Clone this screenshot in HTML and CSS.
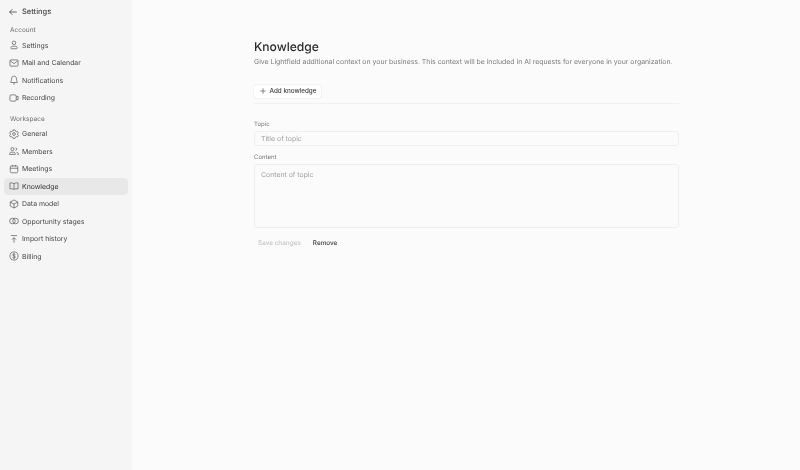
FILE: index.html
```html
<!DOCTYPE html>
<html lang="en">
<head>
<meta charset="utf-8">
<title>Knowledge</title>
<link rel="stylesheet" href="styles.css">
</head>
<body>
<div class="app">
  <aside class="sidebar">
    <div class="back">
      <svg class="back-icon" viewBox="0 0 16 16"><path d="M14 8H2.500M7 3.500 2.500 8 7 12.500"/></svg>
      <span>Settings</span>
    </div>
    <div class="group-label">Account</div>
    <nav class="nav">
      <a class="item"><svg viewBox="0 0 16 16"><circle cx="8" cy="4.500" r="2.800"/><path d="M3 12.300c0-1.500 1.200-2.300 2.600-2.300h4.800c1.400 0 2.600.8 2.600 2.300v.4c0 .8-.6 1.300-1.300 1.300H4.300C3.600 14 3 13.500 3 12.700z"/></svg><span>Settings</span></a>
      <a class="item"><svg viewBox="0 0 16 16"><rect x="1.500" y="3" width="13" height="10" rx="1.500"/><path d="M2 4.500 8 9l6-4.500"/></svg><span>Mail and Calendar</span></a>
      <a class="item"><svg viewBox="0 0 16 16"><path d="M8 1.800c-2.500 0-4 1.900-4 4.200 0 2.800-.6 4.200-1.500 5.200-.2.300 0 .8.400.8h10.200c.4 0 .6-.5.400-.8C12.600 10.200 12 8.800 12 6c0-2.300-1.500-4.200-4-4.200zM6.500 14.200h3"/></svg><span>Notifications</span></a>
      <a class="item"><svg viewBox="0 0 16 16"><rect x="1.500" y="3" width="10" height="10" rx="2"/><path d="M11.500 6.500l3-1.500v6l-3-1.500"/></svg><span>Recording</span></a>
    </nav>
    <div class="group-label second">Workspace</div>
    <nav class="nav">
      <a class="item"><svg viewBox="0 0 16 16"><path d="M6.500 1.500h3l.5 1.800 1.700 1 1.800-.5 1.500 2.600-1.300 1.400v1l1.300 1.400-1.500 2.600-1.800-.5-1.700 1-.5 1.700h-3l-.5-1.700-1.700-1-1.800.5L1 10.200l1.300-1.400v-1L1 6.400l1.500-2.600 1.800.5 1.700-1z"/><circle cx="8" cy="8" r="2.200"/></svg><span>General</span></a>
      <a class="item"><svg viewBox="0 0 16 16"><circle cx="5.500" cy="5" r="2.500"/><path d="M1 13.500v-1c0-1.500 1.200-2.500 2.500-2.500h4c1.300 0 2.500 1 2.500 2.500v1zM10.500 2.700a2.400 2.400 0 0 1 0 4.600M12 10c1.700.2 3 1.200 3 2.700v.8h-2"/></svg><span>Members</span></a>
      <a class="item"><svg viewBox="0 0 16 16"><rect x="2" y="3" width="12" height="11" rx="2"/><path d="M2 6.800h12M5.500 1.500V4M10.500 1.500V4"/></svg><span>Meetings</span></a>
      <a class="item active"><svg viewBox="0 0 16 16"><path d="M8 4.500C7 3.500 5.500 3 4 3H1.500v9.500H5c1.300 0 2.300.4 3 1.200.7-.8 1.700-1.200 3-1.200h3.500V3H12c-1.500 0-3 .5-4 1.500zM8 4.500v9"/></svg><span>Knowledge</span></a>
      <a class="item"><svg viewBox="0 0 16 16"><path d="M8 1.500 14 4.800v6.400l-6 3.300-6-3.300V4.800zM2 4.800 8 8l6-3.200M8 8v6.500"/></svg><span>Data model</span></a>
      <a class="item"><svg viewBox="0 0 16 16"><circle cx="5.500" cy="8" r="4.500"/><circle cx="10.500" cy="8" r="4.500"/></svg><span>Opportunity stages</span></a>
      <a class="item"><svg viewBox="0 0 16 16"><path d="M3 2.500h10M8 14V6M4.800 9 8 5.800 11.200 9"/></svg><span>Import history</span></a>
      <a class="item"><svg viewBox="0 0 16 16"><circle cx="8" cy="8" r="6.500"/><path d="M10.200 5.800C9.800 5 9 4.700 8 4.700c-1.300 0-2.200.6-2.200 1.600 0 2.200 4.500 1.100 4.500 3.400 0 1-1 1.600-2.300 1.600-1.100 0-2-.4-2.400-1.200M8 3.500v9"/></svg><span>Billing</span></a>
    </nav>
  </aside>
  <main class="main">
    <div class="content">
      <h1 class="title">Knowledge</h1>
      <p class="desc">Give Lightfield additional context on your business. This context will be included in AI requests for everyone in your organization.</p>
      <div class="toolbar">
        <button class="add" type="button"><svg viewBox="0 0 16 16"><path d="M8 2.500v11M2.500 8h11"/></svg>Add knowledge</button>
      </div>
      <label class="label topic-label">Topic</label>
      <div class="field input">Title of topic</div>
      <label class="label content-label">Content</label>
      <div class="field area">Content of topic</div>
      <div class="actions">
        <span class="save">Save changes</span>
        <span class="remove">Remove</span>
      </div>
    </div>
  </main>
</div>
</body>
</html>
```
FILE: styles.css
```css
* { box-sizing: border-box; }
html, body { margin: 0; height: 100%; }
body {
  font-family: Inter, "Liberation Sans", sans-serif;
  font-size: 6.900px;
  color: #4a4a4a;
  background: #fbfbfb;
  overflow: hidden;
  text-rendering: geometricPrecision;
}
.app { display: flex; height: 470px; will-change: transform; }
.sidebar {
  width: 132px;
  flex: none;
  background: #f5f5f5;
  padding: 0 4px;
}
.back {
  display: flex;
  align-items: center;
  gap: 4.500px;
  height: 23px;
  padding-left: 3.500px;
  font-size: 7.500px;
  font-weight: 500;
  color: #454545;
}
.back-icon { width: 10px; height: 10px; fill: none; stroke: #444; stroke-width: 1.300; }
.group-label {
  height: 13px;
  margin-top: .5px;
  padding-left: 6px;
  line-height: 13px;
  font-size: 6.500px;
  color: #6e6e6e;
}
.group-label.second { margin-top: 5px; height: 13.500px; line-height: 14px; }
.nav { display: flex; flex-direction: column; }
.item {
  display: flex;
  align-items: center;
  gap: 3px;
  height: 17.500px;
  padding-left: 5px;
  border-radius: 4px;
  font-size: 6.900px;
  color: #474747;
}
.item svg { width: 10px; height: 10px; flex: none; fill: none; stroke: #555; stroke-width: 1.100; }
.item.active { background: #e8e8e8; color: #333; }
.main { flex: 1; min-width: 0; }
.content { width: 424.500px; margin-left: 122px; padding-top: 37.500px; }
.title {
  margin: 0;
  font-size: 12.100px;
  line-height: 17px;
  font-weight: 500;
  color: #2b2b2b;
}
.desc {
  margin: 1px 0 0;
  font-size: 6.900px;
  line-height: 12px;
  color: #7a7a7a;
  white-space: nowrap;
}
.toolbar {
  margin-top: 17px;
  padding-bottom: 5.500px;
  border-bottom: 1px solid #f1f1f1;
}
.add {
  display: inline-flex;
  align-items: center;
  gap: 2.500px;
  height: 13px;
  padding: 0 5px;
  background: #fff;
  border: 0;
  border-radius: 3px;
  box-shadow: 0 0 1.500px rgba(0,0,0,.16);
  font: 500 6.300px Inter, "Liberation Sans", sans-serif;
  color: #3c3c3c;
}
.add svg { width: 8px; height: 8px; fill: none; stroke: #444; stroke-width: 1.200; }
.label { display: block; font-size: 6px; line-height: 9px; color: #7a7a7a; }
.topic-label { margin-top: 16px; }
.content-label { margin-top: 7px; }
.field {
  border: 1px solid #efefef;
  border-radius: 3px;
  background: #fbfbfb;
  font-size: 6.900px;
  color: #a0a0a0;
}
.input { margin-top: 2px; height: 15px; padding-left: 6px; line-height: 13px; }
.area { margin-top: 2px; height: 64px; padding: 4px 6px; line-height: 11px; }
.actions {
  display: flex;
  gap: 12px;
  margin-top: 10px;
  padding-left: 4px;
  font-size: 6.400px;
  font-weight: 500;
  line-height: 11px;
}
.save { color: #c4c4c4; }
.remove { color: #3c3c3c; }
```
